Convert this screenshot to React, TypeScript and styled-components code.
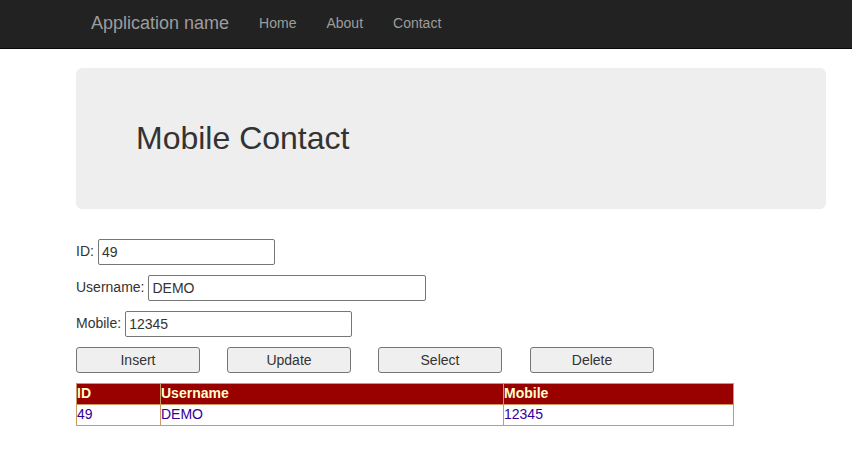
import styled, { createGlobalStyle } from 'styled-components';

const GlobalStyle = createGlobalStyle`
  html, body {
    margin: 0;
    padding: 0;
    background: #fff;
    font-family: "Liberation Sans", Arial, Helvetica, sans-serif;
    font-size: 14px;
    line-height: 1.42857;
    color: #333;
  }
  * {
    box-sizing: border-box;
  }
`;

const Navbar = styled.nav`
  height: 49px;
  background-color: #222;
  border-bottom: 1px solid #080808;
  display: flex;
  align-items: flex-start;
  padding-left: 76px;
`;

const Brand = styled.a`
  font-size: 18px;
  color: #9d9d9d;
  text-decoration: none;
  padding: 0 15px;
  line-height: 46px;
`;

const NavLinks = styled.div`
  display: flex;
`;

const NavLink = styled.a`
  font-size: 14px;
  color: #9d9d9d;
  text-decoration: none;
  padding: 0 15px;
  line-height: 46px;
`;

const Container = styled.div`
  width: 750px;
  margin-left: 76px;
  padding-top: 19px;
`;

const Jumbotron = styled.div`
  height: 141px;
  background-color: #eee;
  border-radius: 6px;
  padding: 0 60px;
  display: flex;
  align-items: center;
  margin-bottom: 30px;

  h1 {
    margin: 0;
    font-size: 32px;
    font-weight: 400;
    color: #333;
  }
`;

const Form = styled.div`
  display: flex;
  flex-direction: column;
  gap: 10px;
`;

const FieldRow = styled.div`
  display: flex;
  align-items: center;
  height: 26px;
`;

const Label = styled.label`
  margin-right: 4px;
`;

const TextInput = styled.input<{ $width: number }>`
  width: ${(p) => p.$width}px;
  height: 26px;
  border: 1px solid #767676;
  border-radius: 2px;
  padding: 1px 3px;
  font-family: inherit;
  font-size: 14px;
  color: #333;
  background: #fff;
`;

const ButtonRow = styled.div`
  display: flex;
  gap: 27px;
  margin-bottom: 10px;
`;

const Button = styled.button`
  width: 124px;
  height: 26px;
  background: #efefef;
  border: 1px solid #767676;
  border-radius: 3px;
  font-family: inherit;
  font-size: 14px;
  color: #333;
  padding: 0;

  &:last-child {
    margin-left: 1px;
  }
`;

const Grid = styled.table`
  width: 658px;
  border-collapse: collapse;
  border: 1px solid #cc9966;
  font-size: 14px;

  th, td {
    border: 1px solid #cc9966;
    padding: 0;
    text-align: left;
    height: 21px;
  }

  th {
    background-color: #990000;
    color: #ffffcc;
    font-weight: bold;
  }

  td {
    background: #fff;
    color: #330099;
  }
`;

const IdCol = styled.col`
  width: 84px;
`;

const NameCol = styled.col`
  width: 343px;
`;

export default function App() {
  return (
    <>
      <GlobalStyle />
      <Navbar>
        <Brand href="#">Application name</Brand>
        <NavLinks>
          <NavLink href="#">Home</NavLink>
          <NavLink href="#">About</NavLink>
          <NavLink href="#">Contact</NavLink>
        </NavLinks>
      </Navbar>
      <Container>
        <Jumbotron>
          <h1>Mobile Contact</h1>
        </Jumbotron>
        <Form>
          <FieldRow>
            <Label>ID:</Label>
            <TextInput $width={177} defaultValue="49" />
          </FieldRow>
          <FieldRow>
            <Label>Username:</Label>
            <TextInput $width={278} defaultValue="DEMO" />
          </FieldRow>
          <FieldRow>
            <Label>Mobile:</Label>
            <TextInput $width={227} defaultValue="12345" />
          </FieldRow>
          <ButtonRow>
            <Button>Insert</Button>
            <Button>Update</Button>
            <Button>Select</Button>
            <Button>Delete</Button>
          </ButtonRow>
        </Form>
        <Grid>
          <colgroup>
            <IdCol />
            <NameCol />
            <col />
          </colgroup>
          <thead>
            <tr>
              <th>ID</th>
              <th>Username</th>
              <th>Mobile</th>
            </tr>
          </thead>
          <tbody>
            <tr>
              <td>49</td>
              <td>DEMO</td>
              <td>12345</td>
            </tr>
          </tbody>
        </Grid>
      </Container>
    </>
  );
}
